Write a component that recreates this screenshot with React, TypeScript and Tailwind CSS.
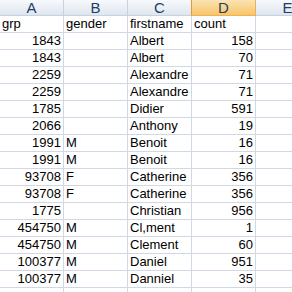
const rows: [string, string, string, string][] = [
  ["grp", "gender", "firstname", "count"],
  ["1843", "", "Albert", "158"],
  ["1843", "", "Albert", "70"],
  ["2259", "", "Alexandre", "71"],
  ["2259", "", "Alexandre", "71"],
  ["1785", "", "Didier", "591"],
  ["2066", "", "Anthony", "19"],
  ["1991", "M", "Benoit", "16"],
  ["1991", "M", "Benoit", "16"],
  ["93708", "F", "Catherine", "356"],
  ["93708", "F", "Catherine", "356"],
  ["1775", "", "Christian", "956"],
  ["454750", "M", "Cl,ment", "1"],
  ["454750", "M", "Clement", "60"],
  ["100377", "M", "Daniel", "951"],
  ["100377", "M", "Danniel", "35"],
  ["", "", "", ""],
  ["", "", "", ""],
];

const isNum = (v: string) => /^\d+$/.test(v);

export default function App() {
  return (
    <div className="h-[292px] w-[292px] overflow-hidden bg-white font-['Liberation_Sans',Arial,sans-serif] text-[13px] text-black">
      <div className="grid grid-cols-[64px_64px_64px_64px_64px]">
        {["A", "B", "C", "D", "E"].map((col) =>
          col === "D" ? (
            <div
              key={col}
              className="flex h-4 items-center justify-center border-b border-l border-b-[#f2b150] border-l-[#e29a3a] border-r border-r-[#e8b060] bg-gradient-to-b from-[#fbe3b1] to-[#f6c56a] pb-px text-[15px] leading-none text-[#223e64] -ml-px"
            >
              {col}
            </div>
          ) : (
            <div
              key={col}
              className="flex h-4 items-center justify-center border-b border-r border-[#c5d2e0] bg-gradient-to-b from-[#f7f9fc] to-[#dfe6ef] pb-px text-[15px] leading-none text-[#223e64]"
            >
              {col}
            </div>
          ),
        )}
        {rows.map((row, i) =>
          [...row, ""].map((cell, j) => (
            <div
              key={`${i}-${j}`}
              className={`h-[17px] overflow-hidden whitespace-nowrap border-b border-r border-[#d0d7e5] px-[2px] leading-[16px] ${
                isNum(cell) && i > 0 ? "text-right" : "text-left"
              }`}
            >
              {cell}
            </div>
          )),
        )}
      </div>
    </div>
  );
}
